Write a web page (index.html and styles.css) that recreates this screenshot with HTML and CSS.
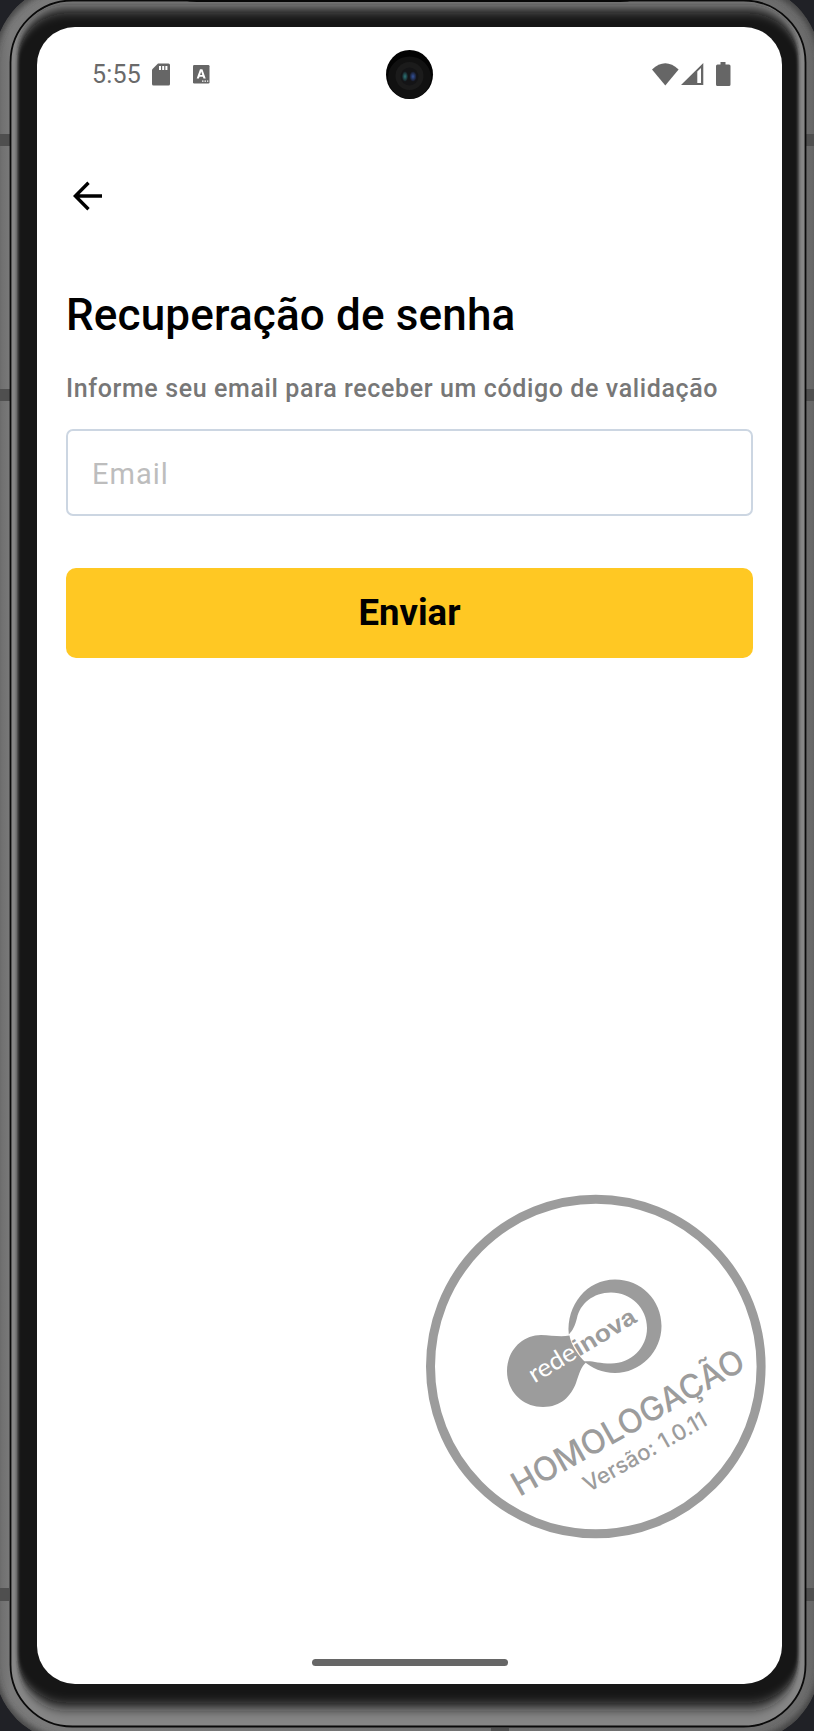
FILE: index.html
```html
<!DOCTYPE html>
<html lang="pt-BR">
<head>
<meta charset="utf-8">
<title>Recuperação de senha</title>
<link rel="stylesheet" href="styles.css">
</head>
<body>
<div class="device">
  <svg class="frame" viewBox="0 0 814 1731" aria-hidden="true">
    <defs>
      <filter id="soft" x="-5%" y="-5%" width="110%" height="110%"><feGaussianBlur stdDeviation="1.4 6.5"/></filter>
      <filter id="edge" x="-5%" y="-5%" width="110%" height="110%"><feGaussianBlur stdDeviation="3"/></filter>
      <linearGradient id="metal" x1="0" x2="1" y1="0" y2="0">
        <stop offset="0" stop-color="#686868"/><stop offset=".02" stop-color="#7a7a7a"/>
        <stop offset=".98" stop-color="#6c6c6c"/><stop offset="1" stop-color="#646464"/>
      </linearGradient>
      <clipPath id="body"><rect x="-6" y="-16" width="826" height="1758" rx="78"/></clipPath>
      <clipPath id="glass"><rect x="11.500" y="1.500" width="793" height="1724" rx="61"/></clipPath>
    </defs>
    <g clip-path="url(#body)">
      <rect x="-6" y="-16" width="826" height="1758" rx="78" fill="url(#metal)"/>
      <rect x="-9" y="-16" width="832" height="1758" rx="82" fill="none" stroke="#3c3c3c" stroke-width="7" filter="url(#edge)"/>
    </g>
    <g fill="#4f4f4f">
      <rect y="134" width="10" height="12"/><rect x="806" y="134" width="8" height="12"/>
      <rect y="389" width="10" height="12"/><rect x="806" y="389" width="8" height="12"/>
      <rect y="1588" width="9" height="13"/><rect x="806" y="1588" width="8" height="13"/>
      <rect x="491" y="1728" width="18" height="3"/>
    </g>
    <rect x="10.500" y=".5" width="795" height="1726" rx="62" fill="#868686" stroke="#0a0a0a" stroke-width="1.800"/>
    <g clip-path="url(#glass)">
      <rect x="17.500" y="9" width="781" height="1698" rx="50" fill="#141414" filter="url(#soft)"/>
    </g>
    <path d="M183 0H634Q628 2 620 2H197Q189 2 183 0Z" fill="#080808"/>
  </svg>
  <main class="screen">
    <header class="status">
      <div class="status-left">
        <span class="clock">5:55</span>
        <svg class="sd" width="18" height="23" viewBox="0 0 18 23"><path d="M6 .5H16.500Q18 .5 18 2V21Q18 22.500 16.500 22.500H1.500Q0 22.500 0 21V6.500Z" fill="#666"/><path d="M7 3h2v4H7zM10.200 3h2v4h-2zM13.400 3h2v4h-2z" fill="#fff"/></svg>
        <svg class="kb" width="17" height="19" viewBox="0 0 17 19"><rect width="16.500" height="18.500" rx="1.200" fill="#666"/><path fill-rule="evenodd" d="M3.700 13.500 7 4.200H9.400L12.700 13.500H10.500L9.900 11.700H6.500L5.900 13.500ZM7.100 9.900H9.300L8.200 6.600Z" fill="#fff"/><path d="M9 15.500h1.500v1.300H9zM11.500 15.500H13v1.300h-1.500zM14 15.500h1.300v1.300H14z" fill="#fff"/></svg>
      </div>
      <svg class="camera" width="48" height="50" viewBox="0 0 48 50">
        <defs><radialGradient id="lensA"><stop offset="0" stop-color="#2d7778"/><stop offset="1" stop-color="#151b20"/></radialGradient><radialGradient id="lensB"><stop offset="0" stop-color="#34529a"/><stop offset="1" stop-color="#151722"/></radialGradient></defs>
        <ellipse cx="23.500" cy="24.500" rx="23.500" ry="24.500" fill="#030303"/><ellipse cx="23.500" cy="27.500" rx="21.500" ry="21" fill="#111"/>
        <circle cx="23.500" cy="26" r="14" fill="#1b1b1b"/><circle cx="23.500" cy="26.500" r="9" fill="#141416"/>
        <ellipse cx="19" cy="26.500" rx="3" ry="5" fill="url(#lensA)"/><ellipse cx="27" cy="26.500" rx="3.500" ry="5" fill="url(#lensB)"/>
      </svg>
      <div class="status-right">
        <svg width="27" height="23" viewBox="0 0 27 23"><path d="M0 6.500Q13.300-6.200 26.600 6.500L13.300 22.500Z" fill="#666"/></svg>
        <svg class="signal" width="23" height="22" viewBox="0 0 23 22"><path fill-rule="evenodd" d="M0 22 22.300 0V22ZM16.300 8.500V20H20V5Z" fill="#666"/></svg>
        <svg class="battery" width="15" height="24" viewBox="0 0 15 24"><path d="M4.500 0h5v2.500H13Q14.500 2.500 14.500 4V22.500Q14.500 24 13 24H1.500Q0 24 0 22.500V4Q0 2.500 1.500 2.500h3Z" fill="#666"/></svg>
      </div>
    </header>
    <button class="back" aria-label="Voltar"><svg width="30" height="30" viewBox="0 0 30 30"><path d="M29 15H3M15.500 1.800 2.300 15 15.500 28.200" fill="none" stroke="#000" stroke-width="3.400"/></svg></button>
    <h1 class="title">Recuperação de senha</h1>
    <p class="hint">Informe seu email para receber um código de validação</p>
    <input class="email" type="email" placeholder="Email">
    <button class="submit">Enviar</button>
    <svg class="stamp" width="344" height="348" viewBox="424 1193 344 348">
      <ellipse cx="595.800" cy="1366.500" rx="165.300" ry="167.300" fill="none" stroke="#9c9c9c" stroke-width="9"/>
      <path d="M569.500 1335.500C560 1337.500 551 1335 541 1335C522 1335 507 1351 507 1371C507 1391 522 1407 543 1407C561 1407 571 1396 576 1383C579 1374 581 1367 586 1362.500C579 1357 571 1345 569.500 1335.500Z" fill="#9c9c9c"/>
      <path fill-rule="evenodd" d="M568.800 1334.500C566 1305 587 1279.500 615 1279.500C641 1279.500 661.500 1300 661.500 1326C661.500 1352 640 1373 615 1373C602 1373 592 1368 584 1361.500C591 1360 598 1363.500 611 1363.500C631 1363.500 647 1348 647 1328C647 1308 631 1292.500 611 1292.500C593 1292.500 580 1304 577 1318C575 1326 573 1330 568.800 1334.500Z" fill="#9c9c9c"/>
      <g transform="translate(534.500 1383.500) rotate(-31)">
        <text class="brand-light" textLength="51" lengthAdjust="spacingAndGlyphs">rede</text>
        <text class="brand-bold" x="52" textLength="69" lengthAdjust="spacingAndGlyphs">inova</text>
      </g>
      <text class="stamp-main" transform="translate(519.500 1497) rotate(-29.500)" textLength="262" lengthAdjust="spacingAndGlyphs">HOMOLOGAÇÃO</text>
      <text class="stamp-sub" transform="translate(588.500 1492.500) rotate(-29.500)" textLength="138" lengthAdjust="spacingAndGlyphs">Versão: 1.0.11</text>
    </svg>
    <div class="home"></div>
  </main>
</div>
</body>
</html>
```
FILE: styles.css
```css
* { box-sizing: border-box; }
body { margin: 0; font-family: Roboto, sans-serif; background: #202126; }
.device { position: relative; width: 814px; height: 1731px; overflow: hidden; padding: 27px 32px 47px 37px; }
.frame { position: absolute; inset: 0; width: 814px; height: 1731px; }
.screen { position: relative; display: flex; flex-direction: column; height: 1657px; padding: 0 29px; border-radius: 38px; background: #fff; overflow: hidden; }
.status { display: grid; grid-template-columns: 1fr 48px 1fr; align-items: center; height: 95px; }
.status-left { display: flex; align-items: center; padding-left: 26px; }
.clock { font-size: 25px; line-height: 30px; color: #6a6a6a; letter-spacing: .2px; width: 60px; }
.kb { margin-left: 23px; }
.status-right { display: flex; align-items: center; justify-content: flex-end; padding: 0 22px 1px 0; }
.signal { margin: 0 12px 0 2px; }
.back { align-self: flex-start; margin: 59px 0 0 7px; width: 30px; height: 30px; padding: 0; border: 0; background: none; }
.back svg { display: block; }
.title { margin: 78px 0 0; font-size: 44px; line-height: 52px; font-weight: 500; color: #000; letter-spacing: .16px; white-space: nowrap; }
.hint { margin: 33px 0 0; font-size: 25px; line-height: 30px; font-weight: 500; color: #777; letter-spacing: .62px; white-space: nowrap; }
.email { margin-top: 25px; height: 87px; border: 2px solid #ccd6e2; border-radius: 7px; padding: 2px 24px 0; font: 400 29px Roboto, sans-serif; letter-spacing: 1px; outline: 0; }
.email::placeholder { color: #bdbdbd; opacity: 1; }
.submit { margin-top: 52px; height: 90px; border: 0; border-radius: 10px; background: #ffc823; color: #000; font: 700 36.5px Roboto, sans-serif; padding: 0 0 2px; }
.stamp { margin: 535px -15px 0 auto; fill: #9c9c9c; flex: none; }
.brand-light { font: 400 25px Lato, sans-serif; fill: #fff; }
.brand-bold { font: 700 24px "Liberation Sans", sans-serif; }
.stamp-main { font: 500 33px Inter, sans-serif; }
.stamp-sub { font: 500 22px Inter, sans-serif; }
.home { width: 196px; height: 7px; border-radius: 4px; background: #666; margin: auto auto 18px; }
```
